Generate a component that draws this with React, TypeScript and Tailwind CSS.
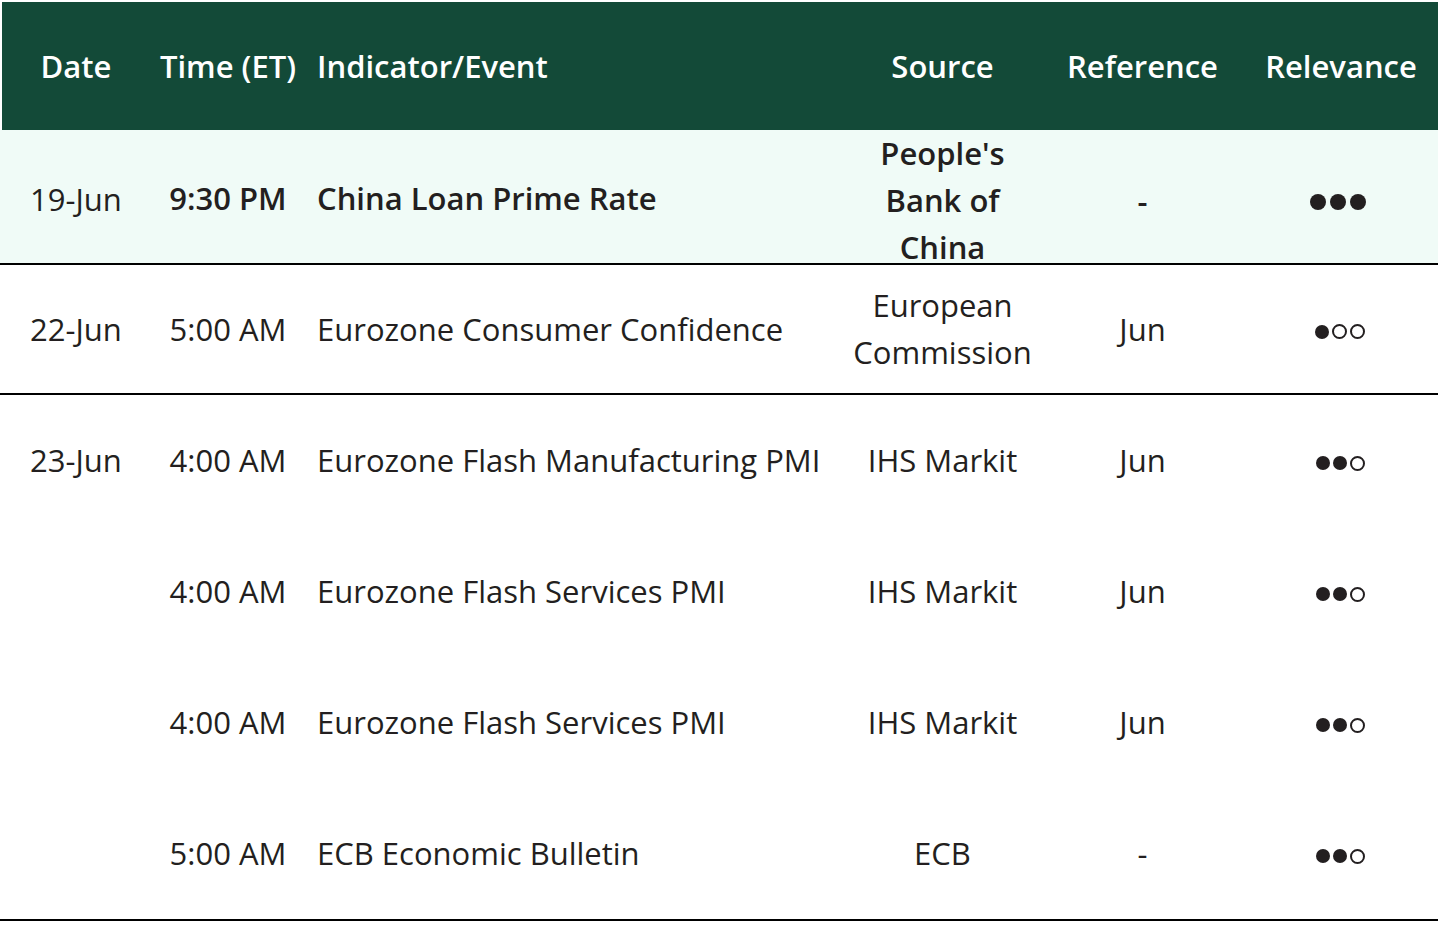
import React from "react"

type Row = {
  date: string
  time: string
  event: string
  source: string[]
  reference: string
  level: number
  highlight?: boolean
  h: string
  border?: boolean
}

const rows: Row[] = [
  {
    date: "19-Jun",
    time: "9:30 PM",
    event: "China Loan Prime Rate",
    source: ["People's", "Bank of", "China"],
    reference: "-",
    level: 3,
    highlight: true,
    h: "h-[135px]",
    border: true,
  },
  {
    date: "22-Jun",
    time: "5:00 AM",
    event: "Eurozone Consumer Confidence",
    source: ["European", "Commission"],
    reference: "Jun",
    level: 1,
    h: "h-[130px]",
    border: true,
  },
  {
    date: "23-Jun",
    time: "4:00 AM",
    event: "Eurozone Flash Manufacturing PMI",
    source: ["IHS Markit"],
    reference: "Jun",
    level: 2,
    h: "h-[131px]",
  },
  {
    date: "",
    time: "4:00 AM",
    event: "Eurozone Flash Services PMI",
    source: ["IHS Markit"],
    reference: "Jun",
    level: 2,
    h: "h-[131px]",
  },
  {
    date: "",
    time: "4:00 AM",
    event: "Eurozone Flash Services PMI",
    source: ["IHS Markit"],
    reference: "Jun",
    level: 2,
    h: "h-[131px]",
  },
  {
    date: "",
    time: "5:00 AM",
    event: "ECB Economic Bulletin",
    source: ["ECB"],
    reference: "-",
    level: 2,
    h: "h-[133px]",
    border: true,
  },
]

const cols = "grid grid-cols-[148px_156px_544px_185px_215px_1fr]"

function Dots({ level, big }: { level: number; big?: boolean }) {
  return (
    <div className={big ? "flex items-center gap-[4px]" : "flex items-center gap-[3px]"}>
      {[0, 1, 2].map((i) =>
        i < level ? (
          <span key={i} className={big ? "w-[16px] h-[16px] rounded-full bg-[#231f20]" : "w-[14px] h-[14px] rounded-full bg-[#231f20]"} />
        ) : (
          <span key={i} className="w-[15px] h-[15px] rounded-full border-2 border-[#231f20]" />
        )
      )}
    </div>
  )
}

export default function App() {
  return (
    <div className="min-h-[938px] bg-white text-[#231f20] text-[31px] font-['Open_Sans',sans-serif] pt-[2px]">
      <div className={`${cols} ml-[2px] h-[128px] items-center bg-[#134a38] text-white font-semibold`}>
        <div className="text-center">Date</div>
        <div className="text-center">Time (ET)</div>
        <div className="pl-[11px]">Indicator/Event</div>
        <div className="text-center">Source</div>
        <div className="text-center">Reference</div>
        <div className="text-center pr-[6px]">Relevance</div>
      </div>
      {rows.map((r, idx) => (
        <div
          key={idx}
          className={`${cols} ${r.h} items-center pl-[2px] ${r.highlight ? "bg-[#f0fbf7]" : ""} ${r.border ? "border-b-2 border-black" : ""}`}
        >
          <div className={`text-center ${r.highlight ? "pb-[4px]" : ""}`}>{r.date}</div>
          <div className={`text-center ${r.highlight ? "font-semibold pb-[6px]" : ""}`}>{r.time}</div>
          <div className={`pl-[11px] whitespace-nowrap ${r.highlight ? "font-semibold pb-[6px]" : ""}`}>{r.event}</div>
          <div className={`text-center leading-[47px] ${r.highlight ? "font-semibold pb-[2px]" : ""}`}>
            {r.source.map((s, i) => (
              <div key={i}>{s}</div>
            ))}
          </div>
          <div className={`text-center ${r.highlight ? "font-semibold" : ""}`}>{r.reference}</div>
          <div className={`flex justify-center pr-[8px] ${r.highlight ? "pr-[12px]" : "pt-[5px]"}`}>
            <Dots level={r.level} big={r.highlight} />
          </div>
        </div>
      ))}
    </div>
  )
}
